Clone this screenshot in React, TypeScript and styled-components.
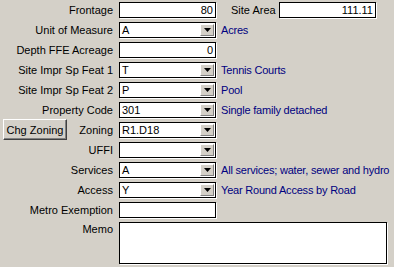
import React from "react";
import styled, { createGlobalStyle } from "styled-components";

const GlobalStyle = createGlobalStyle`
  html, body {
    margin: 0;
    padding: 0;
    background: #d4d0c8;
  }
  body {
    font-family: "Liberation Sans", Arial, sans-serif;
    font-size: 11px;
    color: #000;
  }
`;

const Form = styled.div`
  display: grid;
  grid-template-columns: 119px 97px 1fr;
  grid-auto-rows: 16px;
  row-gap: 4px;
  padding-top: 2px;
  width: 394px;
  height: 265px;
  box-sizing: border-box;
  overflow: hidden;
`;

const Label = styled.div<{ top?: boolean }>`
  padding-right: 6px;
  text-align: right;
  line-height: 16px;
  white-space: nowrap;
  align-self: ${({ top }) => (top ? "start" : "center")};
  margin-top: ${({ top }) => (top ? "-1px" : "0")};
`;

const ButtonCell = styled.div`
  display: flex;
  align-items: center;
  justify-content: space-between;
  padding-left: 3px;
  padding-right: 6px;
  line-height: 16px;
`;

const Field = styled.div<{ right?: boolean }>`
  box-sizing: border-box;
  height: 16px;
  background: #fff;
  border: 1px solid #000;
  box-shadow: 1px 1px 0 #fff;
  padding: 0 2px;
  line-height: 14px;
  text-align: ${({ right }) => (right ? "right" : "left")};
  white-space: nowrap;
  overflow: hidden;
`;

const Combo = styled(Field)`
  position: relative;
  padding-right: 18px;
`;

const DropButton = styled.span`
  position: absolute;
  top: 1px;
  right: 1px;
  width: 14px;
  height: 12px;
  box-sizing: border-box;
  background: #d4d0c8;
  border-top: 1px solid #fff;
  border-left: 1px solid #fff;
  border-right: 1px solid #808080;
  border-bottom: 1px solid #808080;
  display: flex;
  align-items: center;
  justify-content: center;
`;

const Desc = styled.div`
  padding-left: 5px;
  color: #000080;
  line-height: 16px;
  white-space: nowrap;
  letter-spacing: -0.2px;
`;

const SiteArea = styled.div`
  display: flex;
  align-items: center;
  padding-left: 15px;
`;

const SiteLabel = styled.span`
  width: 48px;
  line-height: 16px;
  white-space: nowrap;
`;

const SiteInput = styled(Field)`
  width: 97px;
`;

const Memo = styled(Field)`
  grid-column: 2 / 4;
  height: 42px;
  width: 268px;
`;

const ClassicButton = styled.button`
  box-sizing: border-box;
  height: 21px;
  width: 64px;
  margin: -3px 0 -2px;
  padding: 0;
  font-family: inherit;
  font-size: 11px;
  color: #000;
  background: #d4d0c8;
  border-top: 1px solid #fff;
  border-left: 1px solid #fff;
  border-right: 1px solid #404040;
  border-bottom: 1px solid #404040;
  box-shadow: inset -1px -1px 0 #808080;
`;

const Arrow = () => (
  <svg width="7" height="4" viewBox="0 0 7 4">
    <path d="M0 0h7L3.5 4z" fill="#000" />
  </svg>
);

const ComboField = ({ value }: { value: string }) => (
  <Combo>
    {value}
    <DropButton>
      <Arrow />
    </DropButton>
  </Combo>
);

interface Row {
  label: string;
  value: string;
  combo?: boolean;
  desc?: string;
}

const rows: Array<Row> = [
  { label: "Unit of Measure", value: "A", combo: true, desc: "Acres" },
  { label: "Depth FFE Acreage", value: "0" },
  { label: "Site Impr Sp Feat 1", value: "T", combo: true, desc: "Tennis Courts" },
  { label: "Site Impr Sp Feat 2", value: "P", combo: true, desc: "Pool" },
  { label: "Property Code", value: "301", combo: true, desc: "Single family detached" },
];

const rowsAfter: Array<Row> = [
  { label: "UFFI", value: "", combo: true },
  { label: "Services", value: "A", combo: true, desc: "All services; water, sewer and hydro" },
  { label: "Access", value: "Y", combo: true, desc: "Year Round Access by Road" },
  { label: "Metro Exemption", value: "" },
];

const renderRow = (row: Row) => (
  <React.Fragment key={row.label}>
    <Label>{row.label}</Label>
    {row.combo ? <ComboField value={row.value} /> : <Field right>{row.value}</Field>}
    <Desc>{row.desc}</Desc>
  </React.Fragment>
);

const App = () => {
  return (
    <>
      <GlobalStyle />
      <Form>
        <Label>Frontage</Label>
        <Field right>80</Field>
        <SiteArea>
          <SiteLabel>Site Area</SiteLabel>
          <SiteInput right>111.11</SiteInput>
        </SiteArea>

        {rows.map(renderRow)}

        <ButtonCell>
          <ClassicButton>Chg Zoning</ClassicButton>
          <span>Zoning</span>
        </ButtonCell>
        <ComboField value="R1.D18" />
        <Desc />

        {rowsAfter.map(renderRow)}

        <Label top>Memo</Label>
        <Memo />
      </Form>
    </>
  );
};

export default App;
